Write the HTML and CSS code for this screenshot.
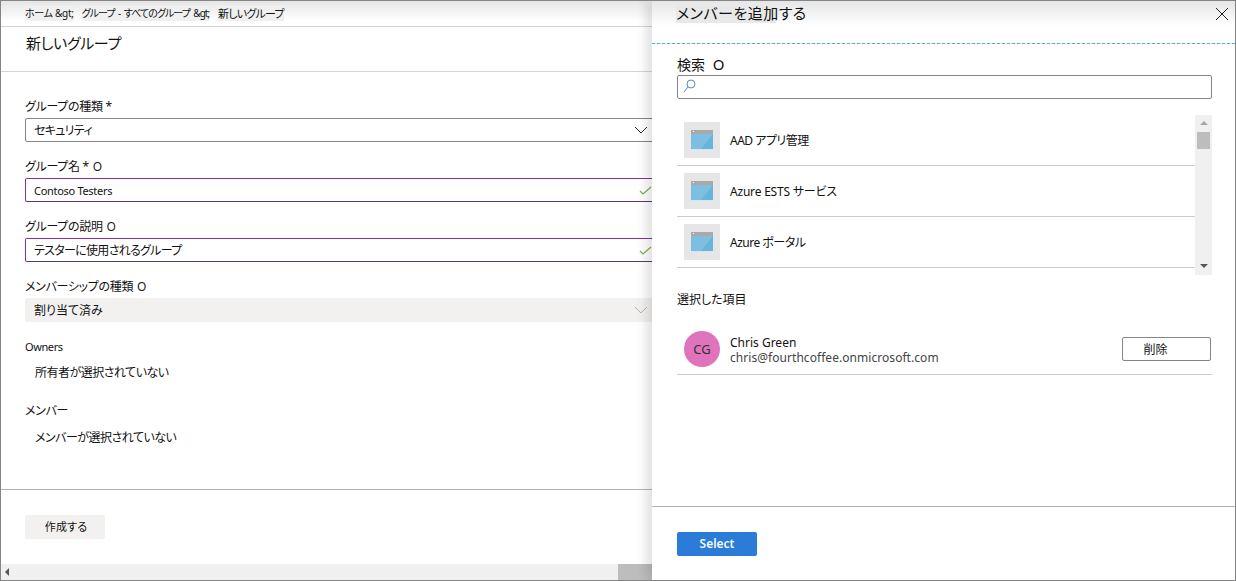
FILE: index.html
```html
<!DOCTYPE html>
<html lang="ja">

<head>
  <meta charset="UTF-8">
  <meta name="viewport" content="width=device-width, initial-scale=1.0">
  <title>新しいグループ</title>
  <link rel="stylesheet" href="styles.css">
</head>

<body>
  <div class="frame">
    <div class="main">
      <div class="crumbs">
        <span class="crumb">ホーム &amp;gt;</span>
        <span class="crumb crumb-mid">グループ - すべてのグループ &amp;gt;</span>
        <span class="crumb crumb-last">新しいグループ</span>
      </div>
      <div class="page-title">新しいグループ</div>

      <div class="form">
        <div class="field">
          <div class="field-label">グループの種類 *</div>
          <div class="input">
            <span>セキュリティ</span>
            <svg class="chevron" viewBox="0 0 14 8"><path d="M1 1l6 6 6-6" /></svg>
          </div>
        </div>
        <div class="field">
          <div class="field-label">グループ名 * <span class="info">O</span></div>
          <div class="input input-valid">
            <span class="latin">Contoso Testers</span>
            <svg class="check" viewBox="0 0 13 9"><path d="M1 5l3 3 8-7" /></svg>
          </div>
        </div>
        <div class="field">
          <div class="field-label">グループの説明 <span class="info">O</span></div>
          <div class="input input-valid">
            <span>テスターに使用されるグループ</span>
            <svg class="check" viewBox="0 0 13 9"><path d="M1 5l3 3 8-7" /></svg>
          </div>
        </div>
        <div class="field">
          <div class="field-label">メンバーシップの種類 <span class="info">O</span></div>
          <div class="input input-disabled">
            <span>割り当て済み</span>
            <svg class="chevron chevron-light" viewBox="0 0 14 8"><path d="M1 1l6 6 6-6" /></svg>
          </div>
        </div>
        <div class="small-label">Owners</div>
        <div class="empty-text">所有者が選択されていない</div>
        <div class="field-label member-label">メンバー</div>
        <div class="empty-text">メンバーが選択されていない</div>
      </div>

      <div class="form-footer">
        <button class="create-btn">作成する</button>
      </div>
      <div class="h-scroll">
        <span class="arrow-left"></span>
        <span class="h-thumb"></span>
      </div>
    </div>

    <div class="panel">
      <div class="panel-head">
        <span class="panel-title">メンバーを追加する</span>
        <svg class="close" viewBox="0 0 12 12"><path d="M0 0l12 12M12 0L0 12" /></svg>
      </div>

      <div class="panel-body">
        <div class="search-label">検索 <span class="info-big">O</span></div>
        <div class="search-box">
          <svg class="search-icon" viewBox="0 0 13 14">
            <circle cx="8" cy="5" r="4" />
            <path d="M5 8l-4 5" />
          </svg>
        </div>

        <div class="list-wrap">
          <div class="list">
            <div class="list-item">
              <div class="tile">
                <svg class="app-icon" viewBox="0 0 22 20">
                  <rect width="22" height="20" fill="#d3e7f2" />
                  <rect width="22" height="19" fill="#67b5da" />
                  <path d="M0 4h22L10 19H0z" fill="#7cbfe0" />
                  <rect width="22" height="4" fill="#a9a9a9" />
                  <rect x="2" y="1" width="1" height="1" fill="#fff" />
                </svg>
              </div>
              <span>AAD アプリ管理</span>
            </div>
            <div class="list-item">
              <div class="tile">
                <svg class="app-icon" viewBox="0 0 22 20">
                  <rect width="22" height="20" fill="#d3e7f2" />
                  <rect width="22" height="19" fill="#67b5da" />
                  <path d="M0 4h22L10 19H0z" fill="#7cbfe0" />
                  <rect width="22" height="4" fill="#a9a9a9" />
                  <rect x="2" y="1" width="1" height="1" fill="#fff" />
                </svg>
              </div>
              <span class="item-wide">Azure ESTS サービス</span>
            </div>
            <div class="list-item">
              <div class="tile">
                <svg class="app-icon" viewBox="0 0 22 20">
                  <rect width="22" height="20" fill="#d3e7f2" />
                  <rect width="22" height="19" fill="#67b5da" />
                  <path d="M0 4h22L10 19H0z" fill="#7cbfe0" />
                  <rect width="22" height="4" fill="#a9a9a9" />
                  <rect x="2" y="1" width="1" height="1" fill="#fff" />
                </svg>
              </div>
              <span>Azure ポータル</span>
            </div>
          </div>
          <div class="v-scroll">
            <span class="arrow-up"></span>
            <span class="v-thumb"></span>
            <span class="arrow-down"></span>
          </div>
        </div>

        <div class="selected-label">選択した項目</div>
        <div class="selected-row">
          <div class="avatar">CG</div>
          <div class="person">
            <div class="person-name">Chris Green</div>
            <div class="person-mail">chris@fourthcoffee.onmicrosoft.com</div>
          </div>
          <button class="remove-btn">削除</button>
        </div>
      </div>

      <div class="panel-footer">
        <button class="select-btn">Select</button>
      </div>
    </div>
  </div>
</body>

</html>
```

FILE: styles.css
```css
* {
  box-sizing: border-box;
}

html,
body {
  margin: 0;
  height: 100%;
  overflow: hidden;
}

body {
  font-family: "Noto Sans", "Noto Sans CJK JP", sans-serif;
  font-size: 12px;
  font-feature-settings: "palt";
  color: #111;
  background: #fff;
}

.frame {
  display: flex;
  height: 581px;
  border: 1px solid #858585;
  overflow: hidden;
}

.main {
  width: 651px;
  flex: none;
  display: flex;
  flex-direction: column;
  overflow: hidden;
}

.crumbs {
  height: 26px;
  flex: none;
  display: flex;
  align-items: center;
  padding: 0 0 1px 24px;
  font-size: 10px;
  border-bottom: 1px solid #d4d4d4;
  background: linear-gradient(#e6e6e6, #fff 80%);
}

.crumb {
  background: #f0f0f0;
  line-height: 15px;
  letter-spacing: -0.3px;
}

.crumb-mid {
  margin-left: 8px;
  letter-spacing: -1px;
  word-spacing: 2px;
}

.crumb-last {
  margin-left: 9px;
  font-size: 11px;
  letter-spacing: -0.8px;
}

.page-title {
  height: 45px;
  flex: none;
  padding: 5px 0 0 25px;
  font-size: 15px;
  line-height: 22px;
  letter-spacing: -0.3px;
  border-bottom: 1px solid #d4d4d4;
}

.form {
  padding: 24px 0 0 24px;
}

.field {
  height: 60px;
}

.field-label {
  height: 22px;
  line-height: 21px;
  font-size: 12px;
  letter-spacing: -0.3px;
  white-space: nowrap;
}

.info {
  font-size: 12px;
  margin-left: 1px;
  color: #222;
}

.input {
  width: 640px;
  height: 24px;
  display: flex;
  align-items: center;
  justify-content: space-between;
  padding: 0 16px 0 8px;
  border: 1px solid #858585;
  border-radius: 2px;
  letter-spacing: -0.7px;
}

.input-valid {
  border-color: #8a2da8 #8a2da8 #5b3a6b;
  padding-right: 12px;
}

.input-valid .latin {
  font-size: 11px;
  letter-spacing: -0.3px;
  padding-top: 1px;
}

.input-disabled {
  background: #f2f1f0;
  border-color: #f2f1f0;
  letter-spacing: 0;
}

.chevron {
  width: 14px;
  height: 8px;
  fill: none;
  stroke: #333;
  stroke-width: 1;
}

.chevron-light {
  stroke: #b5b5b5;
}

.check {
  width: 13px;
  height: 9px;
  fill: none;
  stroke: #7eb04a;
  stroke-width: 1.2;
}

.small-label {
  font-size: 11px;
  line-height: 14px;
  letter-spacing: -0.4px;
  margin-top: 4px;
}

.empty-text {
  padding-left: 10px;
  line-height: 18px;
  letter-spacing: -0.5px;
  margin-top: 10px;
}

.member-label {
  margin-top: 18px;
  height: 19px;
}

.form-footer {
  margin-top: auto;
  height: 75px;
  flex: none;
  border-top: 1px solid #b3b3b3;
  padding: 25px 0 0 24px;
}

.create-btn {
  width: 80px;
  height: 24px;
  border: none;
  border-radius: 2px;
  background: #f2f1f0;
  font: inherit;
  font-size: 11px;
  letter-spacing: 0.2px;
  color: #111;
  padding: 0 0 2px 2px;
}

.h-scroll {
  height: 16px;
  flex: none;
  display: flex;
  align-items: center;
  justify-content: space-between;
  background: #f0f0f0;
  padding-left: 4px;
}

.arrow-left {
  border: 4px solid transparent;
  border-left-width: 0;
  border-right: 4px solid #555;
}

.h-thumb {
  width: 34px;
  height: 100%;
  background: #bdbdbd;
}

.panel {
  flex: 1;
  position: relative;
  display: flex;
  flex-direction: column;
  background: #fff;
  box-shadow: -6px 0 10px rgba(0, 0, 0, 0.12);
}

.panel-head {
  height: 43px;
  flex: none;
  display: flex;
  justify-content: space-between;
  padding: 1px 7px 0 24px;
  border-bottom: 1px dashed #4eb4e4;
  background: linear-gradient(#e6e6e6, #fff 60%);
}

.panel-title {
  height: 18px;
  margin-top: 3px;
  font-size: 15px;
  line-height: 16px;
  letter-spacing: 0.5px;
  background: linear-gradient(to right, #e8e8e8 100px, transparent 100px);
}

.close {
  width: 12px;
  height: 12px;
  margin-top: 6px;
  fill: none;
  stroke: #222;
  stroke-width: 1;
}

.panel-body {
  flex: 1;
  padding: 11px 23px 0 25px;
}

.search-label {
  height: 20px;
  font-size: 14px;
  line-height: 19px;
}

.info-big {
  margin-left: 4px;
  font-size: 15px;
  line-height: 1;
}

.search-box {
  height: 24px;
  border: 1px solid #858585;
  border-radius: 2px;
  padding: 3px 0 0 5px;
}

.search-icon {
  display: block;
  width: 13px;
  height: 14px;
  fill: none;
  stroke: #4a90d9;
  stroke-width: 1;
}

.list-wrap {
  display: flex;
  margin-top: 16px;
  height: 160px;
}

.list {
  flex: 1;
}

.list-item {
  height: 51px;
  display: flex;
  align-items: center;
  gap: 10px;
  padding: 0 0 0 7px;
  border-bottom: 1px solid #cbcbcb;
  letter-spacing: -0.5px;
}

.item-wide {
  letter-spacing: -0.2px;
}

.tile {
  width: 36px;
  height: 36px;
  display: flex;
  align-items: center;
  justify-content: center;
  background: #e6e6e6;
}

.app-icon {
  display: block;
  width: 22px;
  height: 20px;
}

.v-scroll {
  width: 17px;
  display: flex;
  flex-direction: column;
  align-items: center;
  background: #f0f0f0;
  padding-top: 6px;
}

.arrow-up {
  border: 4px solid transparent;
  border-top-width: 0;
  border-bottom: 4px solid #a6a6a6;
}

.v-thumb {
  width: 13px;
  height: 17px;
  margin-top: 7px;
  background: #bdbdbd;
}

.arrow-down {
  margin-top: auto;
  margin-bottom: 7px;
  border: 4px solid transparent;
  border-bottom-width: 0;
  border-top: 4px solid #555;
}

.selected-label {
  margin-top: 16px;
  line-height: 18px;
}

.selected-row {
  display: flex;
  align-items: center;
  margin-top: 22px;
  padding: 0 1px 7px 7px;
  border-bottom: 1px solid #cbcbcb;
}

.avatar {
  width: 36px;
  height: 36px;
  border-radius: 50%;
  background: #df74bd;
  display: flex;
  align-items: center;
  justify-content: center;
  font-size: 13px;
  color: #333;
}

.person {
  flex: 1;
  margin: 2px 0 0 10px;
  line-height: 15px;
}

.person-mail {
  color: #444;
  letter-spacing: 0.05px;
}

.remove-btn {
  width: 89px;
  height: 24px;
  background: #fff;
  border: 1px solid #858585;
  border-radius: 2px;
  font: inherit;
  color: #111;
  padding: 0 22px 0 0;
}

.panel-footer {
  height: 74px;
  flex: none;
  border-top: 1px solid #b3b3b3;
  padding: 25px 0 0 25px;
}

.select-btn {
  width: 80px;
  height: 24px;
  border: none;
  border-radius: 2px;
  background: #2b7cd9;
  color: #f4f8fd;
  font: inherit;
  font-weight: 600;
  padding: 0 0 2px;
}
```
